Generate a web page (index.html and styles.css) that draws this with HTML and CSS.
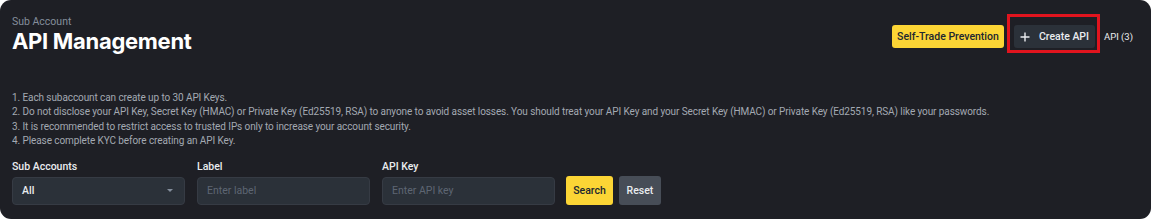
FILE: index.html
```html
<!DOCTYPE html>
<html lang="en">
<head>
<meta charset="utf-8">
<title>API Management</title>
<link rel="stylesheet" href="styles.css">
</head>
<body>
<div class="card">
  <header class="head">
    <div class="titles">
      <div class="sub">Sub Account</div>
      <h1 class="title">API Management</h1>
    </div>
    <div class="actions">
      <button class="btn btn-yellow btn-stp" type="button">Self-Trade Prevention</button>
      <button class="btn btn-create" type="button">
        <svg class="plus" width="10" height="10" viewBox="0 0 10 10" aria-hidden="true"><path d="M5 0.5v9M0.5 5h9" stroke="#EAECEF" stroke-width="1.4" fill="none"/></svg>
        <span>Create API</span>
        <span class="highlight"></span>
      </button>
      <span class="count">API (3)</span>
    </div>
  </header>
  <div class="notes">
    <div>1. Each subaccount can create up to 30 API Keys.</div>
    <div>2. Do not disclose your API Key, Secret Key (HMAC) or Private Key (Ed25519, RSA) to anyone to avoid asset losses. You should treat your API Key and your Secret Key (HMAC) or Private Key (Ed25519, RSA) like your passwords.</div>
    <div>3. It is recommended to restrict access to trusted IPs only to increase your account security.</div>
    <div>4. Please complete KYC before creating an API Key.</div>
  </div>
  <form class="filters">
    <div class="field">
      <label class="label">Sub Accounts</label>
      <div class="select"><span>All</span><span class="caret"></span></div>
    </div>
    <div class="field">
      <label class="label">Label</label>
      <input class="input" type="text" placeholder="Enter label">
    </div>
    <div class="field">
      <label class="label">API Key</label>
      <input class="input" type="text" placeholder="Enter API key">
    </div>
    <button class="btn btn-yellow btn-search" type="button">Search</button>
    <button class="btn btn-reset" type="button">Reset</button>
  </form>
</div>
</body>
</html>
```

FILE: styles.css
```css
* { box-sizing: border-box; }
html, body { margin: 0; padding: 0; background: #ffffff; }
body { font-family: "Roboto", "Noto Sans", sans-serif; }

.card {
  width: 1151px;
  height: 219px;
  background: #1E1F25;
  border-radius: 11px;
  padding: 15px 12px 13px 12px;
  color: #EAECEF;
}

.head {
  display: flex;
  justify-content: space-between;
  align-items: flex-start;
}
.sub {
  font-size: 10.5px;
  line-height: 14px;
  color: #848E9C;
}
.title {
  margin: 0;
  font-family: "Inter", "Roboto", sans-serif;
  font-size: 22px;
  line-height: 24px;
  font-weight: 700;
  color: #FFFFFF;
  letter-spacing: -0.3px;
}

.actions {
  display: flex;
  align-items: center;
  margin-top: 10px;
  margin-right: 6px;
}
.btn {
  border: 0;
  border-radius: 3px;
  font-family: inherit;
  font-weight: 500;
  font-size: 10.5px;
  cursor: pointer;
  display: inline-flex;
  align-items: center;
  justify-content: center;
  padding: 0;
}
.btn-yellow { background: #FCD535; color: #202630; }
.btn-stp { width: 112px; height: 23px; }
.btn-create {
  position: relative;
  margin-left: 10px;
  width: 81px;
  height: 23px;
  background: #2B3139;
  color: #EAECEF;
  gap: 9px;
}
.plus { display: block; }
.highlight {
  position: absolute;
  left: -7px;
  top: -11px;
  width: 93px;
  height: 39px;
  border: 3px solid #E1141E;
  pointer-events: none;
}
.count {
  margin-left: 9px;
  font-size: 9.5px;
  color: #EAECEF;
}

.notes {
  margin-top: 38px;
  font-size: 10px;
  line-height: 14.4px;
  letter-spacing: -0.09px;
  color: #A3A9B2;
}

.filters {
  display: flex;
  align-items: flex-end;
  margin: 11px 0 0 0;
}
.field {
  display: flex;
  flex-direction: column;
  width: 173px;
  margin-right: 12px;
}
.field:nth-child(3) { margin-right: 11px; }
.label {
  font-size: 10.5px;
  line-height: 14px;
  font-weight: 500;
  color: #EAECEF;
  margin-bottom: 3px;
}
.select, .input {
  height: 28px;
  width: 173px;
  background: #2B3139;
  border: 1px solid #363B44;
  border-radius: 4px;
  font-family: inherit;
  font-size: 10.5px;
  color: #EAECEF;
  padding: 0 9px;
  outline: none;
}
.select {
  display: flex;
  align-items: center;
  justify-content: space-between;
  font-weight: 500;
}
.caret {
  width: 0;
  height: 0;
  border-left: 3px solid transparent;
  border-right: 3px solid transparent;
  border-top: 3px solid #848E9C;
  margin-right: 2px;
}
.input::placeholder { color: #5E6673; }

.btn-search { width: 47px; height: 29px; }
.btn-reset {
  margin-left: 6px;
  width: 42px;
  height: 29px;
  background: #474D57;
  color: #EAECEF;
}
```
